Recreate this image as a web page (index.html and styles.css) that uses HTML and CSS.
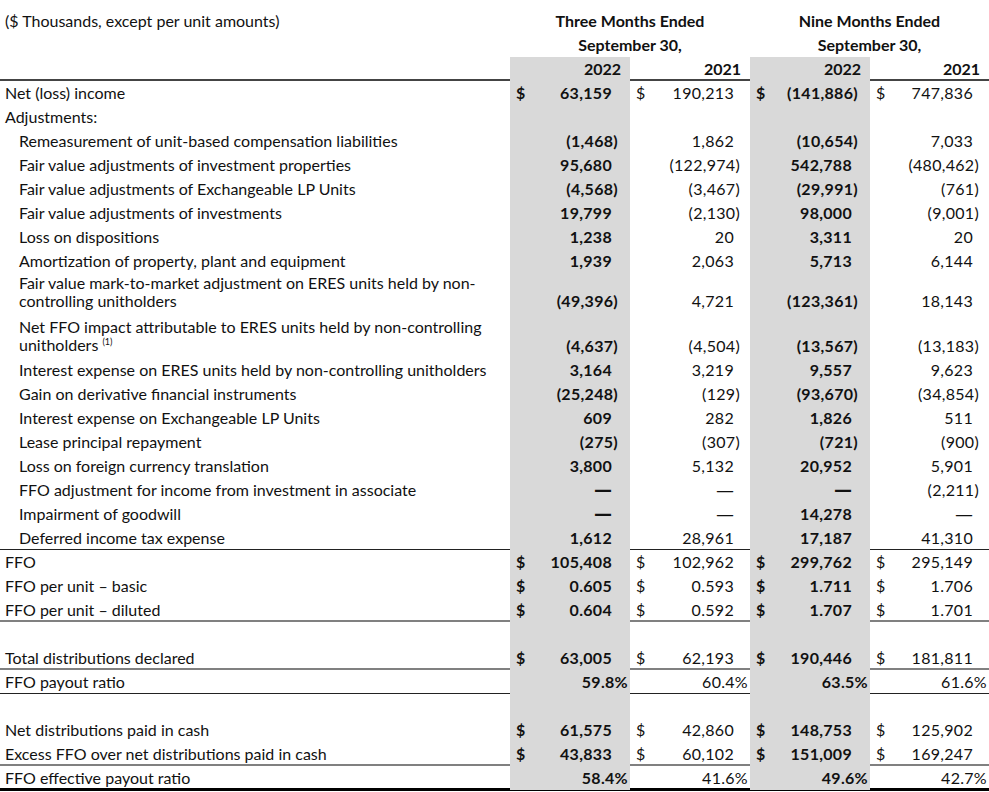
FILE: index.html
```html
<!DOCTYPE html>
<html lang="en">
<head>
<meta charset="utf-8">
<title>FFO Reconciliation</title>
<link rel="stylesheet" href="styles.css">
</head>
<body>
<div class="sheet">
  <div class="row">
    <div class="lbl">($ Thousands, except per unit amounts)</div>
    <div class="grp">Three Months Ended</div>
    <div class="grp">Nine Months Ended</div>
  </div>
  <div class="row">
    <div class="lbl"></div>
    <div class="grp">September 30,</div>
    <div class="grp">September 30,</div>
  </div>
  <div class="row b-head">
    <div class="lbl"></div>
    <div class="c yr sh">2022</div>
    <div class="c yr">2021</div>
    <div class="c yr sh">2022</div>
    <div class="c yr">2021</div>
  </div>

  <div class="row">
    <div class="lbl">Net (loss) income</div>
    <div class="c sh"><span class="cur">$</span><span class="v">63,159</span></div>
    <div class="c"><span class="cur">$</span><span class="v">190,213</span></div>
    <div class="c sh"><span class="cur">$</span><span class="v">(141,886<span class="rp">)</span></span></div>
    <div class="c"><span class="cur">$</span><span class="v">747,836</span></div>
  </div>
  <div class="row">
    <div class="lbl">Adjustments:</div>
    <div class="c sh"></div><div class="c"></div><div class="c sh"></div><div class="c"></div>
  </div>
  <div class="row">
    <div class="lbl ind">Remeasurement of unit-based compensation liabilities</div>
    <div class="c sh"><span class="v">(1,468<span class="rp">)</span></span></div>
    <div class="c"><span class="v">1,862</span></div>
    <div class="c sh"><span class="v">(10,654<span class="rp">)</span></span></div>
    <div class="c"><span class="v">7,033</span></div>
  </div>
  <div class="row">
    <div class="lbl ind">Fair value adjustments of investment properties</div>
    <div class="c sh"><span class="v">95,680</span></div>
    <div class="c"><span class="v">(122,974<span class="rp">)</span></span></div>
    <div class="c sh"><span class="v">542,788</span></div>
    <div class="c"><span class="v">(480,462<span class="rp">)</span></span></div>
  </div>
  <div class="row">
    <div class="lbl ind">Fair value adjustments of Exchangeable LP Units</div>
    <div class="c sh"><span class="v">(4,568<span class="rp">)</span></span></div>
    <div class="c"><span class="v">(3,467<span class="rp">)</span></span></div>
    <div class="c sh"><span class="v">(29,991<span class="rp">)</span></span></div>
    <div class="c"><span class="v">(761<span class="rp">)</span></span></div>
  </div>
  <div class="row">
    <div class="lbl ind">Fair value adjustments of investments</div>
    <div class="c sh"><span class="v">19,799</span></div>
    <div class="c"><span class="v">(2,130<span class="rp">)</span></span></div>
    <div class="c sh"><span class="v">98,000</span></div>
    <div class="c"><span class="v">(9,001<span class="rp">)</span></span></div>
  </div>
  <div class="row">
    <div class="lbl ind">Loss on dispositions</div>
    <div class="c sh"><span class="v">1,238</span></div>
    <div class="c"><span class="v">20</span></div>
    <div class="c sh"><span class="v">3,311</span></div>
    <div class="c"><span class="v">20</span></div>
  </div>
  <div class="row">
    <div class="lbl ind">Amortization of property, plant and equipment</div>
    <div class="c sh"><span class="v">1,939</span></div>
    <div class="c"><span class="v">2,063</span></div>
    <div class="c sh"><span class="v">5,713</span></div>
    <div class="c"><span class="v">6,144</span></div>
  </div>
  <div class="row tall-a">
    <div class="lbl ind two">Fair value mark-to-market adjustment on ERES units held by non-<br>controlling unitholders</div>
    <div class="c sh"><span class="v">(49,396<span class="rp">)</span></span></div>
    <div class="c"><span class="v">4,721</span></div>
    <div class="c sh"><span class="v">(123,361<span class="rp">)</span></span></div>
    <div class="c"><span class="v">18,143</span></div>
  </div>
  <div class="row tall-b">
    <div class="lbl ind two">Net FFO impact attributable to ERES units held by non-controlling<br>unitholders <sup class="fn">(1)</sup></div>
    <div class="c sh"><span class="v">(4,637<span class="rp">)</span></span></div>
    <div class="c"><span class="v">(4,504<span class="rp">)</span></span></div>
    <div class="c sh"><span class="v">(13,567<span class="rp">)</span></span></div>
    <div class="c"><span class="v">(13,183<span class="rp">)</span></span></div>
  </div>
  <div class="row">
    <div class="lbl ind">Interest expense on ERES units held by non-controlling unitholders</div>
    <div class="c sh"><span class="v">3,164</span></div>
    <div class="c"><span class="v">3,219</span></div>
    <div class="c sh"><span class="v">9,557</span></div>
    <div class="c"><span class="v">9,623</span></div>
  </div>
  <div class="row">
    <div class="lbl ind">Gain on derivative financial instruments</div>
    <div class="c sh"><span class="v">(25,248<span class="rp">)</span></span></div>
    <div class="c"><span class="v">(129<span class="rp">)</span></span></div>
    <div class="c sh"><span class="v">(93,670<span class="rp">)</span></span></div>
    <div class="c"><span class="v">(34,854<span class="rp">)</span></span></div>
  </div>
  <div class="row">
    <div class="lbl ind">Interest expense on Exchangeable LP Units</div>
    <div class="c sh"><span class="v">609</span></div>
    <div class="c"><span class="v">282</span></div>
    <div class="c sh"><span class="v">1,826</span></div>
    <div class="c"><span class="v">511</span></div>
  </div>
  <div class="row">
    <div class="lbl ind">Lease principal repayment</div>
    <div class="c sh"><span class="v">(275<span class="rp">)</span></span></div>
    <div class="c"><span class="v">(307<span class="rp">)</span></span></div>
    <div class="c sh"><span class="v">(721<span class="rp">)</span></span></div>
    <div class="c"><span class="v">(900<span class="rp">)</span></span></div>
  </div>
  <div class="row">
    <div class="lbl ind">Loss on foreign currency translation</div>
    <div class="c sh"><span class="v">3,800</span></div>
    <div class="c"><span class="v">5,132</span></div>
    <div class="c sh"><span class="v">20,952</span></div>
    <div class="c"><span class="v">5,901</span></div>
  </div>
  <div class="row">
    <div class="lbl ind">FFO adjustment for income from investment in associate</div>
    <div class="c sh"><span class="v dash">—</span></div>
    <div class="c"><span class="v dash">—</span></div>
    <div class="c sh"><span class="v dash">—</span></div>
    <div class="c"><span class="v">(2,211<span class="rp">)</span></span></div>
  </div>
  <div class="row">
    <div class="lbl ind">Impairment of goodwill</div>
    <div class="c sh"><span class="v dash">—</span></div>
    <div class="c"><span class="v dash">—</span></div>
    <div class="c sh"><span class="v">14,278</span></div>
    <div class="c"><span class="v dash">—</span></div>
  </div>
  <div class="row b-dark">
    <div class="lbl ind">Deferred income tax expense</div>
    <div class="c sh"><span class="v">1,612</span></div>
    <div class="c"><span class="v">28,961</span></div>
    <div class="c sh"><span class="v">17,187</span></div>
    <div class="c"><span class="v">41,310</span></div>
  </div>

  <div class="row">
    <div class="lbl">FFO</div>
    <div class="c sh"><span class="cur">$</span><span class="v">105,408</span></div>
    <div class="c"><span class="cur">$</span><span class="v">102,962</span></div>
    <div class="c sh"><span class="cur">$</span><span class="v">299,762</span></div>
    <div class="c"><span class="cur">$</span><span class="v">295,149</span></div>
  </div>
  <div class="row">
    <div class="lbl">FFO per unit – basic</div>
    <div class="c sh"><span class="cur">$</span><span class="v">0.605</span></div>
    <div class="c"><span class="cur">$</span><span class="v">0.593</span></div>
    <div class="c sh"><span class="cur">$</span><span class="v">1.711</span></div>
    <div class="c"><span class="cur">$</span><span class="v">1.706</span></div>
  </div>
  <div class="row b-gray">
    <div class="lbl">FFO per unit – diluted</div>
    <div class="c sh"><span class="cur">$</span><span class="v">0.604</span></div>
    <div class="c"><span class="cur">$</span><span class="v">0.592</span></div>
    <div class="c sh"><span class="cur">$</span><span class="v">1.707</span></div>
    <div class="c"><span class="cur">$</span><span class="v">1.701</span></div>
  </div>
  <div class="row">
    <div class="lbl"></div>
    <div class="c sh"></div><div class="c"></div><div class="c sh"></div><div class="c"></div>
  </div>
  <div class="row b-gray">
    <div class="lbl">Total distributions declared</div>
    <div class="c sh"><span class="cur">$</span><span class="v">63,005</span></div>
    <div class="c"><span class="cur">$</span><span class="v">62,193</span></div>
    <div class="c sh"><span class="cur">$</span><span class="v">190,446</span></div>
    <div class="c"><span class="cur">$</span><span class="v">181,811</span></div>
  </div>
  <div class="row b-dark">
    <div class="lbl">FFO payout ratio</div>
    <div class="c sh"><span class="v pct">59.8%</span></div>
    <div class="c"><span class="v pct">60.4%</span></div>
    <div class="c sh"><span class="v pct">63.5%</span></div>
    <div class="c"><span class="v pct">61.6%</span></div>
  </div>
  <div class="row">
    <div class="lbl"></div>
    <div class="c sh"></div><div class="c"></div><div class="c sh"></div><div class="c"></div>
  </div>
  <div class="row">
    <div class="lbl">Net distributions paid in cash</div>
    <div class="c sh"><span class="cur">$</span><span class="v">61,575</span></div>
    <div class="c"><span class="cur">$</span><span class="v">42,860</span></div>
    <div class="c sh"><span class="cur">$</span><span class="v">148,753</span></div>
    <div class="c"><span class="cur">$</span><span class="v">125,902</span></div>
  </div>
  <div class="row b-gray">
    <div class="lbl">Excess FFO over net distributions paid in cash</div>
    <div class="c sh"><span class="cur">$</span><span class="v">43,833</span></div>
    <div class="c"><span class="cur">$</span><span class="v">60,102</span></div>
    <div class="c sh"><span class="cur">$</span><span class="v">151,009</span></div>
    <div class="c"><span class="cur">$</span><span class="v">169,247</span></div>
  </div>
  <div class="row b-end">
    <div class="lbl">FFO effective payout ratio</div>
    <div class="c sh"><span class="v pct">58.4%</span></div>
    <div class="c"><span class="v pct">41.6%</span></div>
    <div class="c sh"><span class="v pct">49.6%</span></div>
    <div class="c"><span class="v pct">42.7%</span></div>
  </div>
</div>
</body>
</html>
```
FILE: styles.css
```css
html, body {
  margin: 0;
  padding: 0;
  background: #fff;
}
body {
  font-family: Lato, "Open Sans", sans-serif;
  font-size: 16px;
  color: #111;
}
.sheet {
  width: 989px;
  padding-top: 9px;
}
.row {
  display: grid;
  grid-template-columns: 510px 120px 120px 120px 119px;
  height: 24px;
  box-sizing: border-box;
  line-height: 24px;
}
.lbl {
  padding-left: 5px;
  white-space: nowrap;
}
.lbl.ind {
  padding-left: 19px;
}
.grp {
  grid-column: span 2;
  text-align: center;
  font-weight: 700;
}
.c {
  display: flex;
  justify-content: space-between;
  align-items: flex-end;
  white-space: nowrap;
}
.c.sh {
  background: #d9d9d9;
  font-weight: 700;
}
.c.yr {
  justify-content: flex-end;
  padding-right: 9px;
  font-weight: 700;
}
.cur {
  padding-left: 6px;
  margin-right: auto;
}
.v {
  margin-left: auto;
  padding-right: 18px;
  letter-spacing: 0.3px;
}
.c:nth-child(3) .v,
.c:nth-child(5) .v {
  padding-right: 16px;
}
.v.pct,
.c:nth-child(3) .v.pct,
.c:nth-child(5) .v.pct {
  padding-right: 2px;
}
.v.dash {
  font-family: "DejaVu Sans", sans-serif;
  font-size: 18px;
  letter-spacing: 0;
}
.rp {
  margin-right: -6px;
}
.row.tall-a {
  height: 40px;
}
.row.tall-b {
  height: 45px;
}
.lbl.two {
  line-height: 18px;
  padding-top: 1px;
}
.tall-b .lbl.two {
  line-height: 18px;
  padding-top: 5px;
}
.fn {
  font-size: 9px;
  line-height: 0;
  vertical-align: 6px;
}
.b-head {
  border-bottom: 2px solid #444;
}
.b-dark {
  border-bottom: 1px solid #222;
}
.b-gray {
  border-bottom: 2px solid #808080;
}
.b-end {
  height: 25px;
  border-bottom: 3px solid #000;
}
```
